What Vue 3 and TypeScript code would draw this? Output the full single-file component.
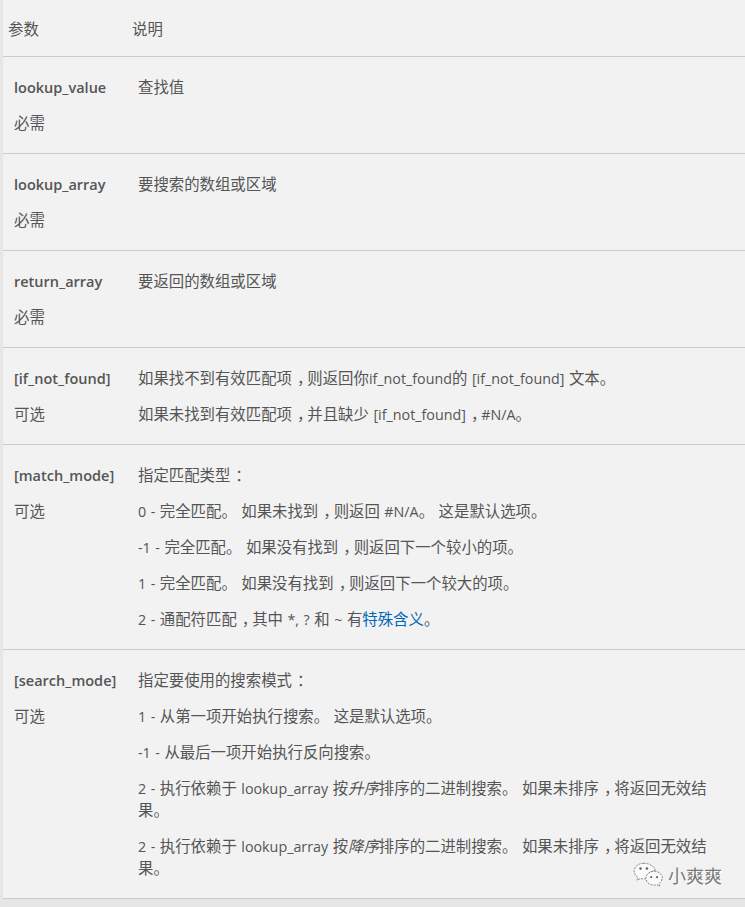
<script setup lang="ts">
type Kind = 'em' | 'a' | 'p' | 'lat'
interface Part { t: string; k?: Kind }
interface Row {
  name: string
  req: string
  lines: Part[][]
}
// Fullwidth comma and colon sit centred in their em box in this design;
// Latin runs are set slightly smaller than the CJK text around them.
const split = (p: Part): Part[] =>
  p.k
    ? [p]
    : p.t
        .split(/([，：]|[\x20-\x7e]+)/)
        .filter(Boolean)
        .map((t) => {
          if (t === '，' || t === '：') return { t, k: 'p' as Kind }
          if (/^[\x20-\x7e]+$/.test(t)) return { t, k: 'lat' as Kind }
          return { t }
        })
const l = (...parts: Part[]): Part[] => parts.flatMap(split)
const s = (t: string) => l({ t })
const rows: Row[] = [
  { name: 'lookup_value', req: '必需', lines: [s('查找值')] },
  { name: 'lookup_array', req: '必需', lines: [s('要搜索的数组或区域')] },
  { name: 'return_array', req: '必需', lines: [s('要返回的数组或区域')] },
  {
    name: '[if_not_found]',
    req: '可选',
    lines: [
      s('如果找不到有效匹配项，则返回你if_not_found的 [if_not_found] 文本。'),
      s('如果未找到有效匹配项，并且缺少 [if_not_found]，#N/A。')
    ]
  },
  {
    name: '[match_mode]',
    req: '可选',
    lines: [
      s('指定匹配类型：'),
      s('0 - 完全匹配。 如果未找到，则返回 #N/A。 这是默认选项。'),
      s('-1 - 完全匹配。 如果没有找到，则返回下一个较小的项。'),
      s('1 - 完全匹配。 如果没有找到，则返回下一个较大的项。'),
      l({ t: '2 - 通配符匹配，其中 *, ? 和 ~ 有' }, { t: '特殊含义', k: 'a' }, { t: '。' })
    ]
  },
  {
    name: '[search_mode]',
    req: '可选',
    lines: [
      s('指定要使用的搜索模式：'),
      s('1 - 从第一项开始执行搜索。 这是默认选项。'),
      s('-1 - 从最后一项开始执行反向搜索。'),
      l({ t: '2 - 执行依赖于 lookup_array 按' }, { t: '升序', k: 'em' }, { t: '排序的二进制搜索。 如果未排序，将返回无效结果。' }),
      l({ t: '2 - 执行依赖于 lookup_array 按' }, { t: '降序', k: 'em' }, { t: '排序的二进制搜索。 如果未排序，将返回无效结果。' })
    ]
  }
]
</script>

<template>
  <div class="page">
    <table class="params">
      <thead>
        <tr>
          <th class="col-name">参数</th>
          <th>说明</th>
        </tr>
      </thead>
      <tbody>
        <tr v-for="row in rows" :key="row.name">
          <td class="col-name">
            <p><strong class="lat">{{ row.name }}</strong></p>
            <p>{{ row.req }}</p>
          </td>
          <td>
            <p v-for="(line, i) in row.lines" :key="i">
              <template v-for="(part, j) in line" :key="j">
                <em v-if="part.k === 'em'">{{ part.t }}</em>
                <a v-else-if="part.k === 'a'" href="#">{{ part.t }}</a>
                <span v-else-if="part.k === 'p'" class="punct">{{ part.t }}</span>
                <span v-else-if="part.k === 'lat'" class="lat">{{ part.t }}</span>
                <template v-else>{{ part.t }}</template>
              </template>
            </p>
          </td>
        </tr>
      </tbody>
    </table>
    <div class="mark">
      <svg width="32" height="28" viewBox="0 0 30 26" aria-hidden="true">
        <path class="bubble" d="M11 2C5.800 2 2 5.300 2 9.400c0 2.400 1.300 4.300 3.400 5.700L4.600 18l3.100-1.700c1 .3 2 .4 3.300.4 1 0 1.800-.1 2.700-.3C13.400 12 17.400 9 22 9c-.9-4-5.500-7-11-7z" />
        <path class="bubble" d="M28.500 16c0-3.700-3.500-6.500-7.700-6.500S13 12.300 13 16s3.600 6.500 7.800 6.500c.9 0 1.800-.1 2.600-.4l2.600 1.500-.7-2.500c1.700-1.200 2.800-3 2.800-5.100z" />
        <circle class="eye" cx="8" cy="7" r="1.200" /><circle class="eye" cx="14" cy="7" r="1.200" />
        <circle class="eye" cx="18" cy="15" r="1" /><circle class="eye" cx="23.500" cy="15" r="1" />
      </svg>
      <span class="mark-name">小爽爽</span>
    </div>
  </div>
</template>

<style>
html, body { margin: 0; background: #e6e6e6; }
</style>

<style scoped>
.page {
  position: relative;
  height: 907px;
  overflow: hidden;
  background: #e6e6e6;
  padding-left: 3px;
  box-sizing: border-box;
  font-family: "Open Sans", "Noto Sans CJK SC", sans-serif;
  font-size: 15.4px;
  line-height: 22px;
  color: #555;
}
.lat {
  font-size: 14.3px;
  line-height: 1;
  word-spacing: 0.8px;
}
strong.lat { font-size: 14.5px; font-weight: 600; }
.params {
  width: 742px;
  border-collapse: collapse;
  table-layout: fixed;
  background: #f2f2f2;
}
th {
  font-weight: 400;
  text-align: left;
  padding: 19px 6px 15px 5px;
  border-bottom: 1px solid #ccc;
}
th.col-name { padding-right: 7px; }
.col-name { width: 112px; }
td {
  vertical-align: top;
  padding: 20px 32px 18px 11px;
  border-bottom: 1px solid #ccc;
}
td.col-name { padding-right: 0; }
p { margin: 0 0 14px; }
p:last-child { margin-bottom: 0; }
em { font-style: italic; }
a { color: #0067b8; text-decoration: none; }
.punct { display: inline-block; line-height: 1; transform: translateX(5px); }
.mark {
  position: absolute;
  left: 632px;
  top: 861px;
  display: flex;
  align-items: center;
  gap: 4px;
  color: #7a7a7a;
  font-size: 18px;
  line-height: 28px;
}
.mark-name {
  font-family: "Noto Sans CJK SC", sans-serif;
  text-shadow: 1px 1px 0 #fff;
}
.bubble { fill: #fafafa; stroke: #777; stroke-width: .8; stroke-dasharray: 2 1; }
.eye { fill: #666; }
</style>
